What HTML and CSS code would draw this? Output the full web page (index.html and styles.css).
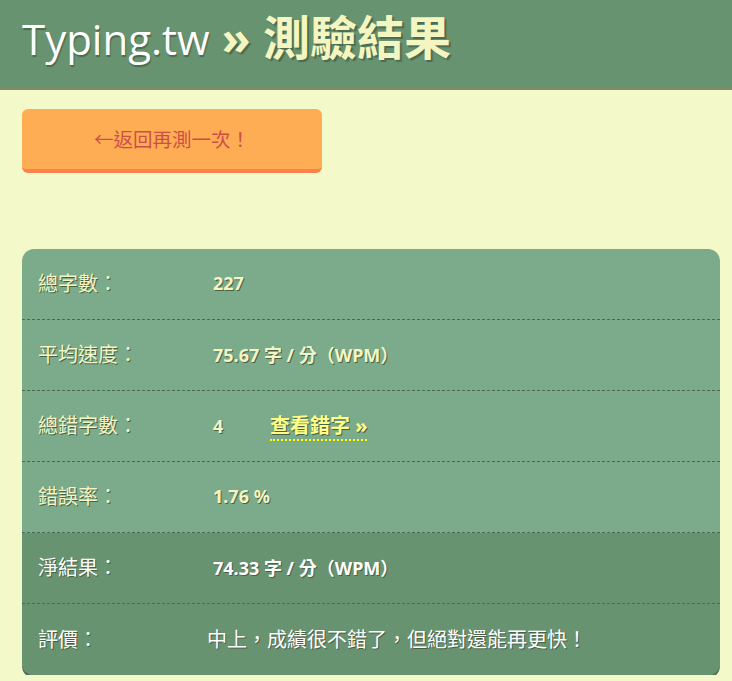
FILE: index.html
```html
<!DOCTYPE html>
<html lang="zh-Hant">
<head>
    <meta charset="UTF-8">
    <meta name="viewport" content="width=device-width, initial-scale=1.0">
    <title>Typing.tw » 測驗結果</title>
    <link rel="stylesheet" href="styles.css">
</head>
<body>
    <header class="top">
        <h1><span class="site">Typing.tw</span> <span class="page">» 測驗結果</span></h1>
    </header>

    <main class="content">
        <a class="retry" href="#">←返回再測一次！</a>

        <div class="result">
            <div class="row">
                <div class="label">總字數：</div>
                <div class="value">227</div>
            </div>
            <div class="row">
                <div class="label">平均速度：</div>
                <div class="value">75.67 字 / 分（WPM）</div>
            </div>
            <div class="row">
                <div class="label">總錯字數：</div>
                <div class="value">4 <a class="errors" href="#">查看錯字 »</a></div>
            </div>
            <div class="row">
                <div class="label">錯誤率：</div>
                <div class="value">1.76 %</div>
            </div>
            <div class="row final">
                <div class="label">淨結果：</div>
                <div class="value">74.33 字 / 分（WPM）</div>
            </div>
            <div class="row final">
                <div class="label">評價：</div>
                <div class="value comment">中上，成績很不錯了，但絕對還能再更快！</div>
            </div>
        </div>
    </main>
</body>
</html>
```

FILE: styles.css
```css
body {
    margin: 0;
    background: #f3f9c8;
    font-family: "Noto Sans", "Noto Sans CJK TC", sans-serif;
    color: #f3f6c4;
}
.top {
    height: 88px;
    background: #679370;
    border-bottom: 2px solid #7f8a68;
    padding-left: 22px;
    display: flex;
    align-items: center;
}
.top h1 {
    margin: 0;
    margin-top: -14px;
    font-size: 47px;
    font-weight: normal;
    line-height: 1;
    white-space: nowrap;
}
.site {
    font-family: "Open Sans", sans-serif;
    font-size: 42px;
    color: #ffffff;
    text-shadow: 1px 2px 1px #4c6a50;
}
.page {
    font-weight: bold;
    color: #f3f6c0;
    text-shadow: 2px 2px 1px #4c6a50;
}
.content {
    padding: 19px 12px 0 22px;
}
.retry {
    display: flex;
    justify-content: center;
    align-items: center;
    box-sizing: border-box;
    width: 300px;
    height: 64px;
    padding-bottom: 2px;
    background: #ffad55;
    border-bottom: 4px solid #f98348;
    border-radius: 6px;
    color: #cc4f47;
    font-family: "Noto Sans CJK TC", sans-serif;
    font-size: 19.5px;
    text-decoration: none;
}
.result {
    margin-top: 76px;
    background: #7bab8b;
    border-radius: 12px;
    overflow: hidden;
    box-shadow: 0 3px 0 #4f6f55;
}
.row {
    display: flex;
    align-items: center;
    box-sizing: border-box;
    height: 71px;
    padding-bottom: 3px;
    border-bottom: 1px dashed #4c6a52;
    text-shadow: 1px 1px 0 #4a6045;
}
.row:last-child {
    border-bottom: none;
}
.row.final {
    background: #679370;
    color: #ffffff;
}
.label {
    width: 175px;
    padding-left: 16px;
    font-family: "Noto Sans CJK TC", sans-serif;
    font-size: 20px;
}
.value {
    font-size: 18px;
    font-weight: bold;
}
.value.comment {
    margin-left: -6px;
    font-family: "Noto Sans CJK TC", sans-serif;
    font-size: 20px;
    font-weight: normal;
}
.errors {
    margin-left: 42px;
    color: #ffff88;
    font-size: 20px;
    text-decoration: none;
    border-bottom: 2px dotted #ffff00;
}
```
